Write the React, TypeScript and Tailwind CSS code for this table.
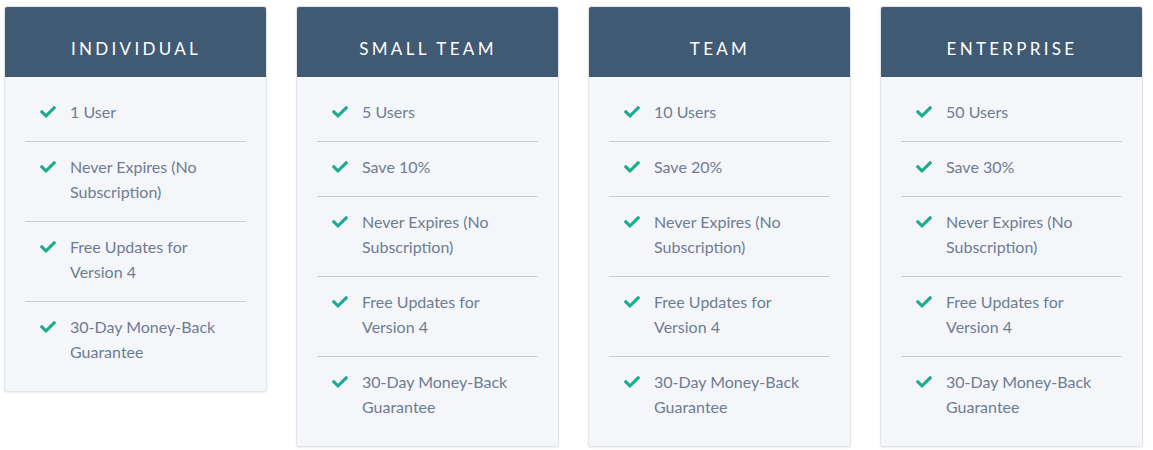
import React from "react";

const plans = [
  { name: "INDIVIDUAL", items: ["1 User", "Never Expires (No Subscription)", "Free Updates for Version 4", "30-Day Money-Back Guarantee"] },
  { name: "SMALL TEAM", items: ["5 Users", "Save 10%", "Never Expires (No Subscription)", "Free Updates for Version 4", "30-Day Money-Back Guarantee"] },
  { name: "TEAM", items: ["10 Users", "Save 20%", "Never Expires (No Subscription)", "Free Updates for Version 4", "30-Day Money-Back Guarantee"] },
  { name: "ENTERPRISE", items: ["50 Users", "Save 30%", "Never Expires (No Subscription)", "Free Updates for Version 4", "30-Day Money-Back Guarantee"] },
];

function Check() {
  return (
    <svg width="16" height="13" viewBox="0 0 512 410" className="shrink-0 mt-[6px]" fill="#1bab8d">
      <path d="M173.9 400.6L7.5 234.2c-10-10-10-26.2 0-36.2l36.2-36.2c10-10 26.2-10 36.2 0L192 273.9 432.1 33.8c10-10 26.2-10 36.2 0l36.2 36.2c10 10 10 26.2 0 36.2L210.1 400.6c-10 10-26.2 10-36.2 0z" />
    </svg>
  );
}

export default function App() {
  return (
    <div className="flex items-start gap-[29px] pl-[4px] pt-[6px] bg-white min-h-[450px]">
      {plans.map((p) => (
        <div key={p.name} className="w-[263px] rounded-[3px] bg-[#f5f6fa] border border-[#e2e5ea] shadow-[0_1px_2px_rgba(0,0,0,0.08)] overflow-hidden">
          <div className="h-[70px] bg-[#415a73] flex items-center justify-center">
            <span className="text-white text-[17px] tracking-[3.3px] pl-[1px] pt-[14px]" style={{ fontFamily: "Lato, sans-serif" }}>
              {p.name}
            </span>
          </div>
          <ul className="px-[20px] pt-[10px] pb-[10px]">
            {p.items.map((it, i) => (
              <li
                key={i}
                className={`flex gap-[14px] pl-[15px] pr-[10px] pt-[12px] pb-[17px] text-[16px] leading-[25px] text-[#6d7c94] ${i > 0 ? "border-t border-[#c9ced6]" : ""}`}
                style={{ fontFamily: "'Source Sans Pro', Lato, sans-serif" }}
              >
                <Check />
                <span>{it}</span>
              </li>
            ))}
          </ul>
        </div>
      ))}
    </div>
  );
}
